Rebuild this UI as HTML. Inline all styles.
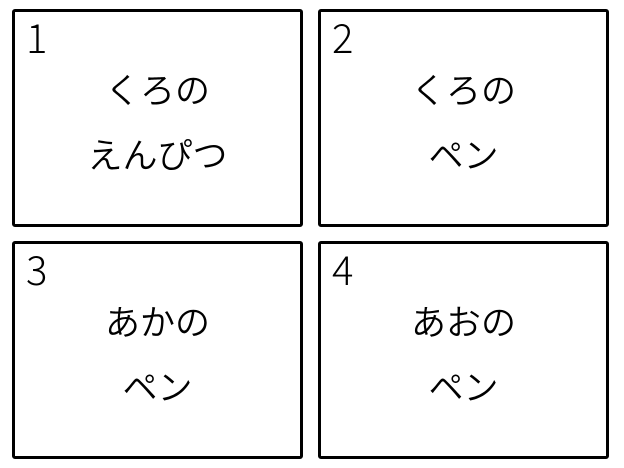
<!DOCTYPE html><html><head><style>
body{margin:0;width:624px;height:468px;background:#fff;position:relative;font-family:"Noto Sans CJK JP",sans-serif;font-weight:400;}
.b{position:absolute;width:285px;height:212px;border:3px solid #000;border-radius:3px;}
.n{position:absolute;left:11px;top:2px;font-size:40px;line-height:44px;font-weight:300;}
.t{position:absolute;left:0;right:0;text-align:center;font-size:35px;line-height:44px;font-weight:350;}
.l1{top:55px}.l2{top:120px}
</style></head><body>
<div class="b" style="left:12px;top:9px"><div class="n">1</div><div class="t l1">くろの</div><div class="t l2">えんぴつ</div></div>
<div class="b" style="left:318px;top:9px"><div class="n">2</div><div class="t l1">くろの</div><div class="t l2">ペン</div></div>
<div class="b" style="left:12px;top:241px"><div class="n">3</div><div class="t l1">あかの</div><div class="t l2">ペン</div></div>
<div class="b" style="left:318px;top:241px"><div class="n">4</div><div class="t l1">あおの</div><div class="t l2">ペン</div></div>
</body></html>
